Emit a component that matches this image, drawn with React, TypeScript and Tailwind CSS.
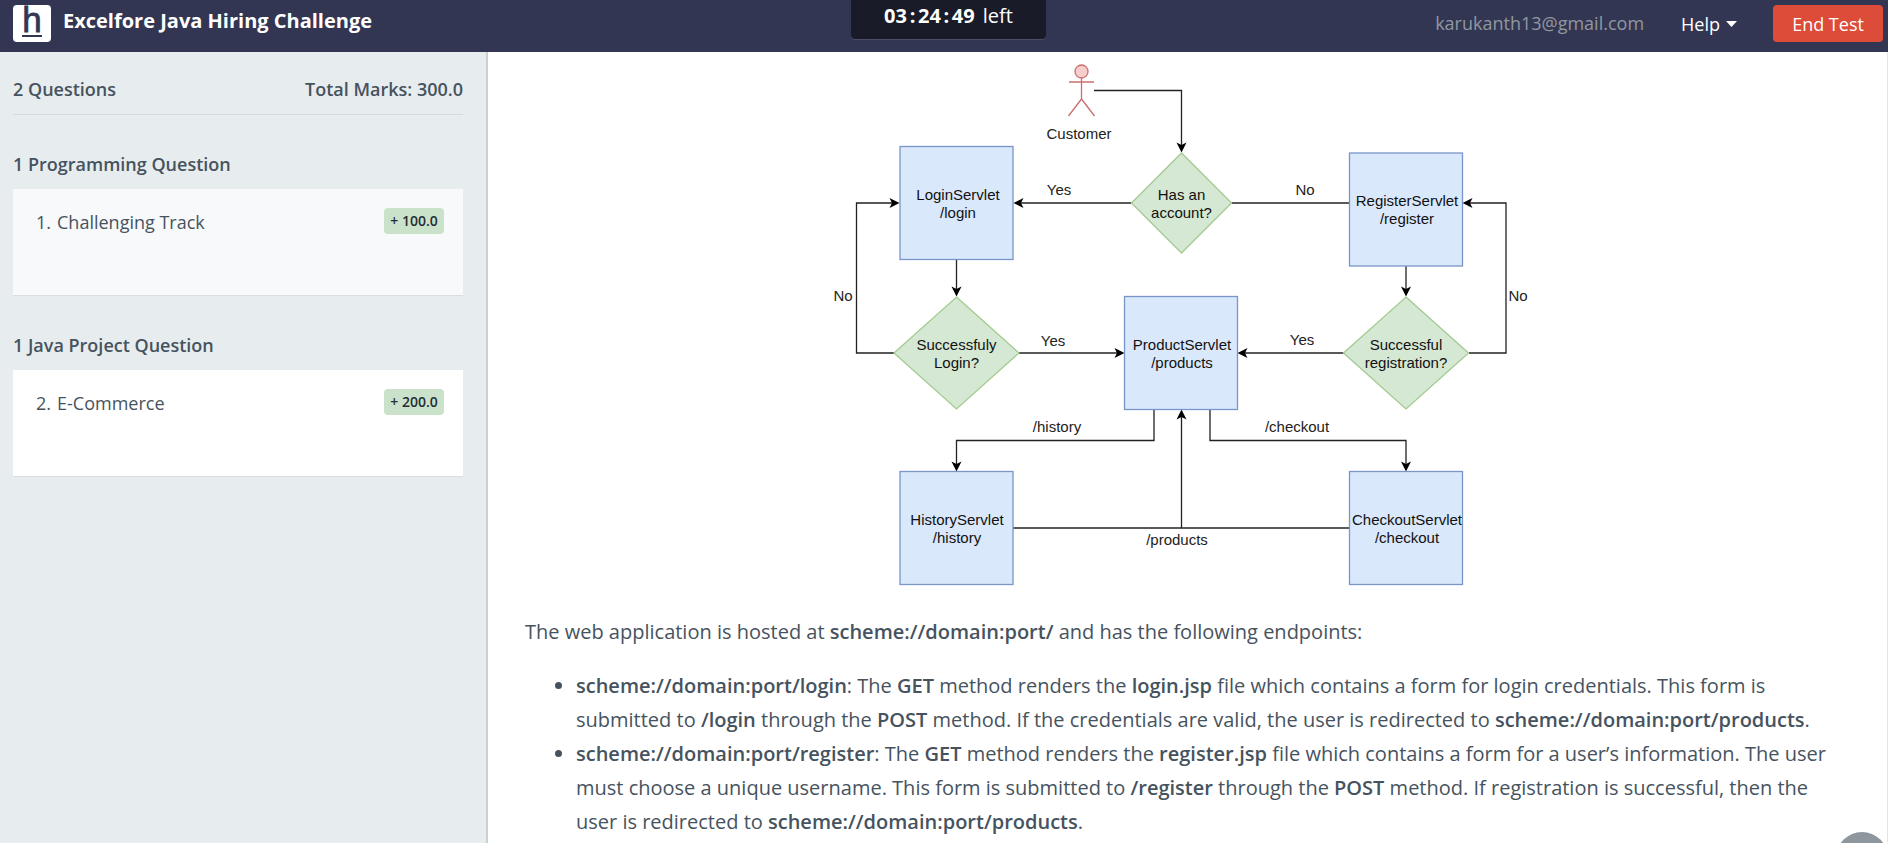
import type { ReactNode } from "react";

type Question = { number: number; title: string; marks: string };
type Section = { heading: string; active: boolean; questions: Question[] };

const sections: Section[] = [
  {
    heading: "1 Programming Question",
    active: false,
    questions: [{ number: 1, title: "Challenging Track", marks: "+ 100.0" }],
  },
  {
    heading: "1 Java Project Question",
    active: true,
    questions: [{ number: 2, title: "E-Commerce", marks: "+ 200.0" }],
  },
];

function Logo() {
  return (
    <svg width="38" height="37" viewBox="0 0 38 37" role="img" aria-label="HackerEarth" className="overflow-visible">
      <rect width="38" height="37" rx="4" fill="#fff" />
      <text
        x="19"
        y="27"
        textAnchor="middle"
        fontFamily="'Liberation Sans', Arial, sans-serif"
        fontSize="35"
        fill="#333652"
        stroke="#333652"
        strokeWidth="0.8"
      >
        h
      </text>
      <rect x="9" y="30" width="20" height="2" fill="#333652" />
    </svg>
  );
}

function Header() {
  return (
    <header className="grid h-[52px] shrink-0 grid-cols-[1fr_195px_1fr] items-start bg-[#333652] pl-[9px] text-white">
      <div className="flex gap-3 pt-[5px] pl-1">
        <Logo />
        <h1 className="text-xl leading-8 font-bold whitespace-nowrap">Excelfore Java Hiring Challenge</h1>
      </div>
      <div className="flex h-[39px] items-start justify-center gap-2 rounded-b bg-[#1a1b29] pt-0.5 text-xl leading-7 shadow-[0_1px_0_#4a4c68]">
        <span className="flex font-bold">
          <span>03</span>
          <span className="w-[11px] text-center">:</span>
          <span>24</span>
          <span className="w-[11px] text-center">:</span>
          <span>49</span>
        </span>
        <span>left</span>
      </div>
      <div className="flex justify-end pt-[5px] pr-[5px] text-lg leading-9">
        <span className="mr-[37px] text-[#8f989f]">karukanth13@gmail.com</span>
        <button type="button" className="mr-9 flex items-center gap-1.5">
          Help
          <svg width="11" height="6" viewBox="0 0 11 6" aria-hidden="true">
            <path d="M0 0h11L5.500 6z" fill="#fff" />
          </svg>
        </button>
        <button type="button" className="h-[37px] w-[110px] rounded bg-[#dd4b39]">
          End Test
        </button>
      </div>
    </header>
  );
}

function Sidebar() {
  return (
    <aside className="w-[488px] shrink-0 border-r-2 border-[#c9cfd3] bg-[#e7ecee] pr-[23px] pl-[13px] text-lg leading-6 text-[#46535e]">
      <div className="flex justify-between border-b border-[#d5dadd] pt-[25px] pb-[13px] font-semibold">
        <span>2 Questions</span>
        <span>Total Marks: 300.0</span>
      </div>
      {sections.map((section) => (
        <section key={section.heading} className="pt-[37px]">
          <h2 className="mb-[13px] font-semibold">{section.heading}</h2>
          {section.questions.map((question) => (
            <a
              key={question.number}
              href={`#question-${question.number}`}
              className={`flex h-[107px] items-start justify-between border-b border-[#d9dee0] pt-[19px] pr-[19px] pl-[23px] ${
                section.active ? "bg-white" : "bg-[#f8f9fb]"
              }`}
            >
              <span className="flex gap-1.5 pt-0.5">
                <span>{question.number}.</span>
                <span>{question.title}</span>
              </span>
              <span className="flex h-[26px] w-[60px] items-center justify-center rounded bg-[#cbe2ca] text-sm font-semibold text-[#252c33]">
                {question.marks}
              </span>
            </a>
          ))}
        </section>
      ))}
    </aside>
  );
}

const boxes = [
  { x: 900, y: 146.5, lines: ["LoginServlet", "/login"], tx: 958, ty: 200 },
  { x: 1349.5, y: 153, lines: ["RegisterServlet", "/register"], tx: 1407, ty: 206 },
  { x: 1124.5, y: 296.5, lines: ["ProductServlet", "/products"], tx: 1182, ty: 350 },
  { x: 900, y: 471.5, lines: ["HistoryServlet", "/history"], tx: 957, ty: 525 },
  { x: 1349.5, y: 471.5, lines: ["CheckoutServlet", "/checkout"], tx: 1407, ty: 525 },
];

const diamonds = [
  { cx: 1181.5, cy: 203, rx: 50, ry: 50, lines: ["Has an", "account?"] },
  { cx: 956.5, cy: 353, rx: 62.5, ry: 56, lines: ["Successfuly", "Login?"] },
  { cx: 1406, cy: 353, rx: 62.5, ry: 56, lines: ["Successful", "registration?"] },
];

const edges = [
  "M1094 90.500H1181.500V146",
  "M1131.500 203H1020",
  "M894 353H856.500V203H893",
  "M956.500 260V290",
  "M1406 266V290",
  "M1019 353H1118",
  "M1343.500 353H1244",
  "M1469 353H1506V203H1469",
  "M1154 409.500V440.500H956.500V465",
  "M1210 409.500V440.500H1406V465",
  "M1181.500 528V416",
];

const plainEdges = ["M1231.500 203H1349.500", "M1013 528H1349.500"];

const labels = [
  { x: 1079, y: 139, text: "Customer" },
  { x: 1059, y: 195, text: "Yes" },
  { x: 1305, y: 195, text: "No" },
  { x: 843, y: 301, text: "No" },
  { x: 1518, y: 301, text: "No" },
  { x: 1053, y: 346, text: "Yes" },
  { x: 1302, y: 345, text: "Yes" },
  { x: 1057, y: 432, text: "/history" },
  { x: 1297, y: 432, text: "/checkout" },
  { x: 1177, y: 545, text: "/products" },
];

function Flowchart() {
  return (
    <svg
      width="716"
      height="543"
      viewBox="830 52 716 543"
      role="img"
      aria-label="Servlet flow chart"
      fontFamily="'Liberation Sans', Arial, sans-serif"
      fontSize="15"
      textAnchor="middle"
    >
      <defs>
        <marker id="arrow" markerUnits="userSpaceOnUse" markerWidth="12" markerHeight="12" refX="4" refY="6" orient="auto">
          <path d="M0.500 1L10.500 6L0.500 11L3 6z" fill="#000" />
        </marker>
      </defs>
      <g fill="none" stroke="#222" strokeWidth="1.3">
        {edges.map((d) => (
          <path key={d} d={d} markerEnd="url(#arrow)" />
        ))}
        {plainEdges.map((d) => (
          <path key={d} d={d} />
        ))}
      </g>
      <g fill="#f8cecc" stroke="#c9706c" strokeWidth="1.3">
        <circle cx="1081.500" cy="71.500" r="6.500" />
        <path d="M1081.500 78V99M1069 82H1094M1081.500 99L1068.500 116M1081.500 99L1094.500 116" fill="none" />
      </g>
      {boxes.map((box) => (
        <g key={box.lines[0]}>
          <rect x={box.x} y={box.y} width="113" height="113" fill="#dae8fc" stroke="#7896c8" strokeWidth="1.3" />
          {box.lines.map((line, i) => (
            <text key={line} x={box.tx} y={box.ty + i * 18} fill="#111">
              {line}
            </text>
          ))}
        </g>
      ))}
      {diamonds.map((d) => (
        <g key={d.lines[0]}>
          <path
            d={`M${d.cx} ${d.cy - d.ry}L${d.cx + d.rx} ${d.cy}L${d.cx} ${d.cy + d.ry}L${d.cx - d.rx} ${d.cy}Z`}
            fill="#d5e8d4"
            stroke="#a3cb8e"
            strokeWidth="1.3"
          />
          {d.lines.map((line, i) => (
            <text key={line} x={d.cx} y={d.cy - 3 + i * 18} fill="#111">
              {line}
            </text>
          ))}
        </g>
      ))}
      {labels.map((label) => (
        <text key={`${label.x}-${label.y}`} x={label.x} y={label.y} fill="#222">
          {label.text}
        </text>
      ))}
    </svg>
  );
}

function B({ children }: { children: ReactNode }) {
  return <strong className="font-semibold">{children}</strong>;
}

function Content() {
  return (
    <main className="min-w-0 flex-1 overflow-hidden border-r border-[#e4e6e8] bg-white px-[37px] text-xl leading-[34px] text-[#46535e]">
      <div className="flex justify-center">
        <Flowchart />
      </div>
      <p className="mt-5">
        The web application is hosted at <B>scheme://domain:port/</B> and has the following endpoints:
      </p>
      <ul className="mt-5 list-disc pl-[51px]">
        <li>
          <B>scheme://domain:port/login</B>: The <B>GET</B> method renders the <B>login.jsp</B> file which contains a form for
          login credentials. This form is
          <br />
          submitted to <B>/login</B> through the <B>POST</B> method. If the credentials are valid, the user is redirected to{" "}
          <B>scheme://domain:port/products</B>.
        </li>
        <li>
          <B>scheme://domain:port/register</B>: The <B>GET</B> method renders the <B>register.jsp</B> file which contains a form
          for a user’s information. The user
          <br />
          must choose a unique username. This form is submitted to <B>/register</B> through the <B>POST</B> method. If
          registration is successful, then the
          <br />
          user is redirected to <B>scheme://domain:port/products</B>.
        </li>
      </ul>
    </main>
  );
}

export default function App() {
  return (
    <div className="flex h-screen flex-col overflow-hidden font-['Open_Sans',sans-serif]">
      <Header />
      <div className="flex min-h-0 flex-1">
        <Sidebar />
        <Content />
      </div>
      <button type="button" aria-label="Open chat" className="fixed right-0 -bottom-[41px] size-[52px] rounded-full bg-[#8f979e]" />
    </div>
  );
}
